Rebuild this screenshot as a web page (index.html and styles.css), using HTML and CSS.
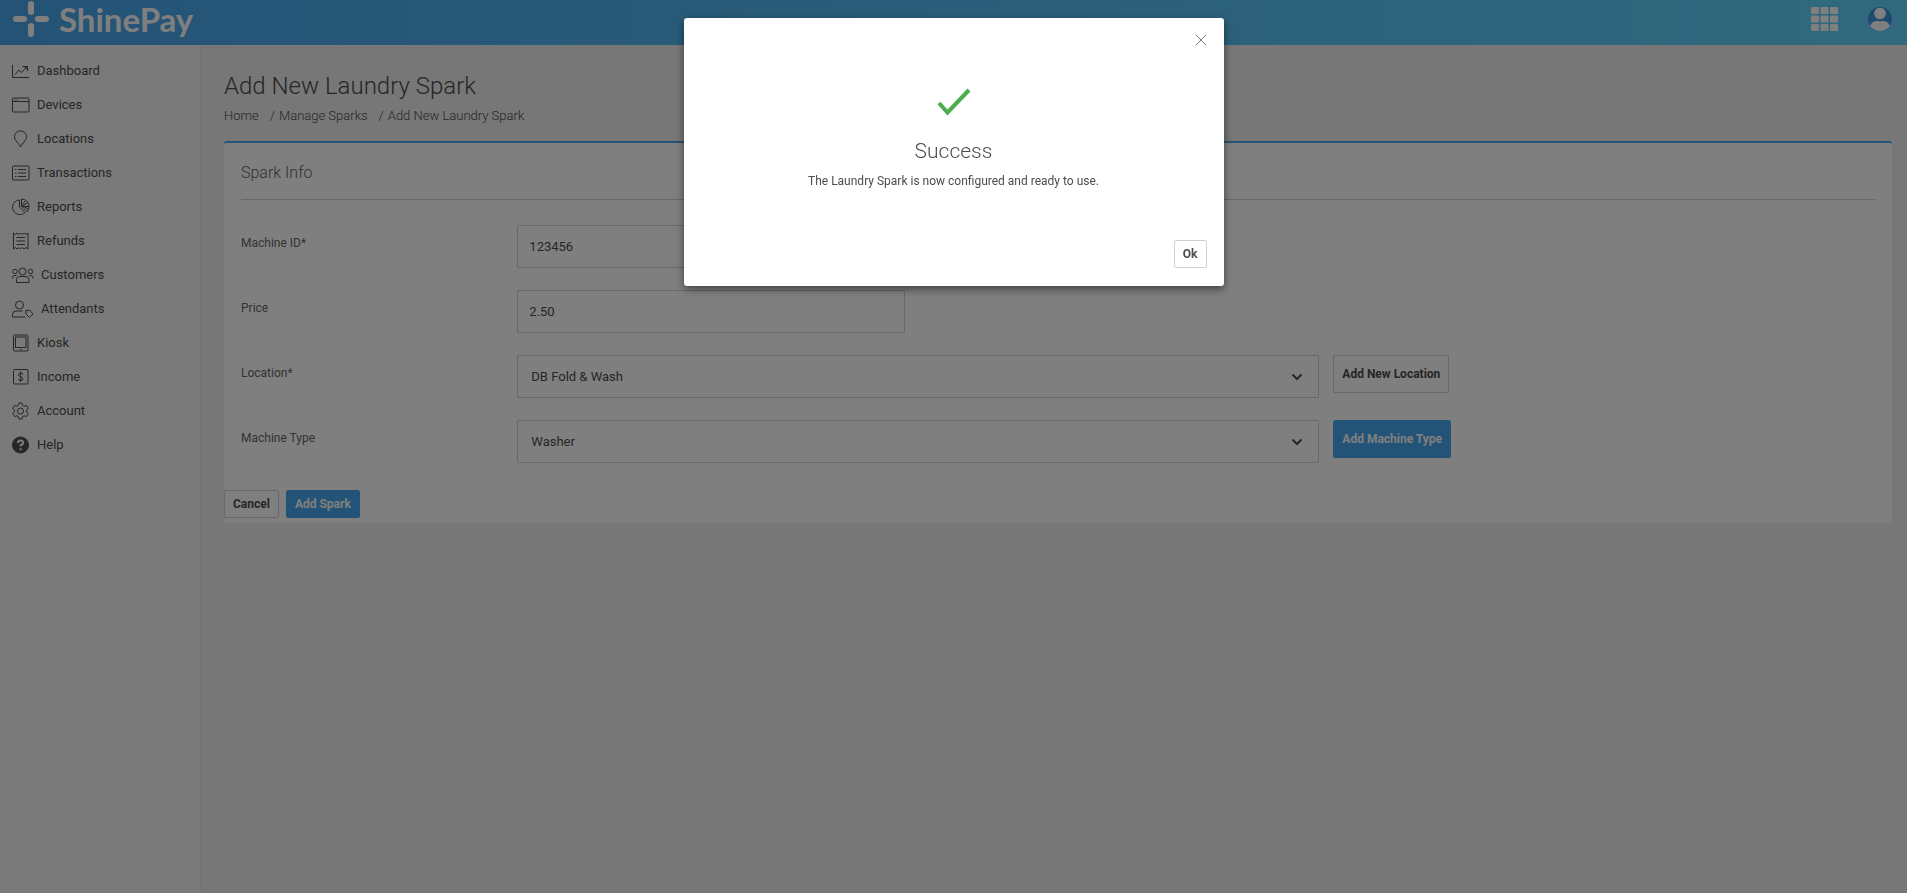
FILE: index.html
```html
<!DOCTYPE html>
<html lang="en">
<head>
    <meta charset="UTF-8">
    <meta name="viewport" content="width=device-width, initial-scale=1.0">
    <title>Add New Laundry Spark - ShinePay</title>
    <link rel="stylesheet" href="styles.css">
</head>
<body>
    <header class="header">
        <a class="logo" href="#">
            <svg width="36" height="36" viewBox="0 0 36 36" stroke="currentColor" stroke-width="6" stroke-linecap="round">
                <path d="M18 3v8M18 25v8M3 18h8M25 18h8"/>
            </svg>
            <span>ShinePay</span>
        </a>
        <div class="header-actions">
            <button class="icon-button" type="button" aria-label="Apps">
                <svg width="27" height="24" viewBox="0 0 27 24" fill="currentColor">
                    <rect x="0" y="0" width="8" height="7" rx="1"/><rect x="9.5" y="0" width="8" height="7" rx="1"/><rect x="19" y="0" width="8" height="7" rx="1"/>
                    <rect x="0" y="8.5" width="8" height="7" rx="1"/><rect x="9.5" y="8.5" width="8" height="7" rx="1"/><rect x="19" y="8.5" width="8" height="7" rx="1"/>
                    <rect x="0" y="17" width="8" height="7" rx="1"/><rect x="9.5" y="17" width="8" height="7" rx="1"/><rect x="19" y="17" width="8" height="7" rx="1"/>
                </svg>
            </button>
            <button class="icon-button" type="button" aria-label="Profile">
                <svg width="24" height="24" viewBox="0 0 24 24">
                    <circle cx="12" cy="12" r="12" fill="#3f94e0"/>
                    <path d="M2.2 19C3.5 15 7 13.300 12 14.500C17 13.300 20.500 15 21.800 19A12 12 0 0 1 2.200 19Z" fill="#fff"/>
                    <circle cx="12" cy="6.500" r="6.300" fill="#fff" stroke="#3f94e0"/>
                </svg>
            </button>
        </div>
    </header>

    <div class="page">
        <nav class="sidebar">
            <a href="#">
                <svg width="18" height="18" viewBox="0 0 18 18"><path d="M.5 3v12.500H17M3 12.500L7 8l2.500 2.500L14.500 5M10.500 4.500h5v4.500M12.500 4.500l3 3"/></svg>
                Dashboard
            </a>
            <a href="#">
                <svg width="18" height="18" viewBox="0 0 18 18"><rect x=".5" y="2" width="16.500" height="14" rx="1"/><path d="M.5 5.500H17M2.500 3.800h1M4.500 3.800h1"/></svg>
                Devices
            </a>
            <a href="#">
                <svg width="18" height="18" viewBox="0 0 18 18"><path d="M8.500 17C7 13.500 2.500 10.500 2.500 6.800a6 6 0 0 1 12 0C14.500 10.500 10 13.500 8.500 17Z"/></svg>
                Locations
            </a>
            <a href="#">
                <svg width="18" height="18" viewBox="0 0 18 18"><rect x=".5" y="2" width="16.500" height="14" rx="1"/><path d="M6 5.500h8M6 9h8M6 12.500h8M3 5.500h1.500M3 9h1.500M3 12.500h1.500"/></svg>
                Transactions
            </a>
            <a href="#">
                <svg width="18" height="18" viewBox="0 0 18 18"><path d="M7.500 2A7.300 7.300 0 1 0 13 14.500L7.500 9ZM9.500 1v7.500H17A7.500 7.500 0 0 0 9.500 1ZM10 8.500l5 5a7 7 0 0 0 2-5M9.500 7l4-4M12 8.500l4 2.500M10 8L15.500 5"/></svg>
                Reports
            </a>
            <a href="#">
                <svg width="18" height="18" viewBox="0 0 18 18"><path d="M1.500 1l2 1.500L5 1l2 1.500L8.500 1l2 1.500L12 1l2 1.500L16 1v16l-2-1.500-2 1.500-1.500-1.500-2 1.500L7 15.500 5 17l-1.500-1.500-2 1.500ZM4.500 5.500H13M4.500 9H13M4.500 12.500H13"/></svg>
                Refunds
            </a>
            <a href="#">
                <svg width="22" height="18" viewBox="0 0 22 18"><circle cx="10.500" cy="5.500" r="3.500"/><circle cx="3" cy="5.500" r="2.200"/><circle cx="18.500" cy="5.500" r="2.200"/><path d="M4.500 16.500v-3Q4.500 10.500 7.500 10.500h6.500Q17 10.500 17 13.500v3ZM.5 12.500V11.500Q.5 9.500 3 9.500h1.500M21 12.500V11.500Q21 9.500 18.500 9.500H17"/></svg>
                Customers
            </a>
            <a href="#">
                <svg width="22" height="18" viewBox="0 0 22 18"><circle cx="7.500" cy="5" r="4"/><path d="M13.500 17H.5v-2.500Q.5 11 4 11h6.500M13.500 10.500l4-.5 3.500 4-3.500 3.500-3.500-3.500ZM15.500 12h.5"/></svg>
                Attendants
            </a>
            <a href="#">
                <svg width="18" height="18" viewBox="0 0 18 18"><rect x="1.500" y="1" width="14.500" height="16" rx="1"/><rect x="3.500" y="3" width="10.500" height="10.500"/><path d="M8 15.300h1.500"/></svg>
                Kiosk
            </a>
            <a href="#">
                <svg width="18" height="18" viewBox="0 0 18 18"><rect x="1.500" y="1.500" width="14.500" height="14.500" rx="1"/><path d="M11 6.500Q11 5 8.700 5T6.500 6.700Q6.500 8.200 8.700 8.700T11 10.800Q11 12.500 8.700 12.500T6.500 11M8.700 3.500v10.500"/></svg>
                Income
            </a>
            <a href="#">
                <svg width="18" height="18" viewBox="0 0 18 18"><circle cx="8.500" cy="9" r="3"/><path d="M7 1h3l.6 2.300 1.500.9L14.500 3.500 16.300 6.200 14.700 8v2l1.600 1.800-1.800 2.700-2.400-.7-1.500.9L10 17H7l-.6-2.300-1.500-.9-2.400.7L.7 11.800 2.300 10V8L.7 6.200 2.500 3.500l2.400.7 1.500-.9Z"/></svg>
                Account
            </a>
            <a href="#">
                <svg width="18" height="18" viewBox="0 0 18 18"><circle class="solid" cx="8.500" cy="9" r="8"/><path class="cutout" d="M5.800 7Q6 4.500 8.500 4.500T11.200 6.800Q11.200 8.300 8.700 9v1.500M8.700 12.200v2"/></svg>
                Help
            </a>
        </nav>

        <main class="content">
            <h1>Add New Laundry Spark</h1>
            <ol class="breadcrumb">
                <li><a href="#">Home</a></li>
                <li><a href="#">Manage Sparks</a></li>
                <li>Add New Laundry Spark</li>
            </ol>

            <form class="panel">
                <h2>Spark Info</h2>

                <div class="form-row">
                    <label for="machineId">Machine ID*</label>
                    <input type="text" id="machineId" value="123456">
                </div>
                <div class="form-row">
                    <label for="price">Price</label>
                    <input type="text" id="price" value="2.50">
                </div>
                <div class="form-row">
                    <label for="location">Location*</label>
                    <div class="select-box">
                        <select id="location">
                            <option>DB Fold &amp; Wash</option>
                        </select>
                        <svg width="12" height="8" viewBox="0 0 12 8"><path d="M1.500 1.500L6 6l4.500-4.500"/></svg>
                    </div>
                    <button class="btn btn-tall" type="button">Add New Location</button>
                </div>
                <div class="form-row">
                    <label for="machineType">Machine Type</label>
                    <div class="select-box">
                        <select id="machineType">
                            <option>Washer</option>
                        </select>
                        <svg width="12" height="8" viewBox="0 0 12 8"><path d="M1.500 1.500L6 6l4.500-4.500"/></svg>
                    </div>
                    <button class="btn btn-primary btn-tall" type="button">Add Machine Type</button>
                </div>

                <div class="form-actions">
                    <button class="btn" type="button">Cancel</button>
                    <button class="btn btn-primary" type="submit">Add Spark</button>
                </div>
            </form>
        </main>
    </div>

    <div class="overlay">
        <div class="modal" role="dialog" aria-modal="true" aria-labelledby="modalTitle">
            <button class="modal-close" type="button" aria-label="Close">
                <svg width="12" height="12" viewBox="0 0 12 12"><path d="M1 1l10 10M11 1L1 11"/></svg>
            </button>
            <div class="modal-body">
                <svg width="34" height="28" viewBox="0 0 34 28"><path d="M2 15l8.500 9.500L32 2"/></svg>
                <h3 id="modalTitle">Success</h3>
                <p>The Laundry Spark is now configured and ready to use.</p>
            </div>
            <div class="modal-footer">
                <button class="btn" type="button">Ok</button>
            </div>
        </div>
    </div>
</body>
</html>
```
FILE: styles.css
```css
:root {
    --blue: #46a6ec;
    --text: #666666;
    --dark: #4c4c4c;
    --border: #d0d0d4;
}

* {
    box-sizing: border-box;
}
body {
    margin: 0;
    min-height: 100vh;
    display: flex;
    flex-direction: column;
    font-family: Roboto, sans-serif;
    font-size: 13px;
    line-height: 20px;
    color: var(--dark);
    background-color: #eeeeee;
}
a {
    color: inherit;
    text-decoration: none;
}
button, input, select {
    font: inherit;
    color: inherit;
}

/* Header */
.header {
    display: flex;
    justify-content: space-between;
    align-items: flex-start;
    height: 45px;
    padding: 0 15px 0 13px;
    background: linear-gradient(to right, #48a6ec, #62d2fc);
    color: #ffffff;
}
.logo {
    display: flex;
    align-items: center;
    gap: 10px;
    height: 38px;
    font-family: Lato, sans-serif;
    font-size: 33px;
    font-weight: 700;
}
.header-actions {
    display: flex;
    align-items: center;
    gap: 30px;
    height: 38px;
}
.icon-button {
    display: flex;
    padding: 0;
    border: none;
    background: none;
    color: #ffffff;
    cursor: pointer;
}

/* Sidebar */
.page {
    display: flex;
    flex: 1;
}
.sidebar {
    display: flex;
    flex-direction: column;
    flex: none;
    width: 201px;
    padding: 9px 12px;
    background-color: #f5f5f5;
    border-right: 1px solid #e6e6e6;
}
.sidebar a {
    display: flex;
    align-items: center;
    gap: 7px;
    height: 34px;
}
.sidebar svg {
    fill: none;
    stroke: currentColor;
}
.sidebar .solid {
    fill: currentColor;
}
.sidebar .cutout {
    stroke: #f5f5f5;
    stroke-width: 2;
}

/* Content */
.content {
    flex: 1;
    padding: 25px 15px 24px 23px;
}
h1, h2, h3, p {
    margin: 0;
    font-weight: 300;
}
h1 {
    font-size: 24px;
    line-height: 32px;
}
.breadcrumb {
    display: flex;
    gap: 11px;
    margin: 4px 0 15px;
    padding: 0;
    list-style: none;
    font-weight: 300;
}
.breadcrumb li + li::before {
    content: "/";
    margin-right: 4px;
}
.panel {
    padding-bottom: 5px;
    background-color: #ffffff;
    border-top: 2px solid var(--blue);
    border-radius: 3px;
}
h2 {
    margin: 0 17px 25px;
    padding: 18px 0 14px;
    border-bottom: 1px solid var(--border);
    font-size: 16px;
    line-height: 24px;
    color: var(--text);
}
.form-row {
    display: grid;
    grid-template-columns: 2fr 6fr 4fr;
    align-items: start;
    margin-bottom: 22px;
}
.form-row label {
    padding: 8px 17px;
    font-size: 12px;
    color: var(--text);
}
.form-row input,
.form-row select {
    width: 100%;
    height: 43px;
    border: 1px solid var(--border);
    border-radius: 1px;
    background-color: #ffffff;
}
.form-row input {
    max-width: 388px;
    margin-left: 16px;
    padding: 0 11px;
}
.form-row select {
    padding: 0 13px;
    appearance: none;
}
.select-box {
    display: grid;
    align-items: center;
    margin: 0 14px 0 16px;
}
.select-box select,
.select-box svg {
    grid-area: 1 / 1;
}
.select-box svg {
    justify-self: end;
    margin-right: 16px;
    fill: none;
    stroke: var(--dark);
    stroke-width: 2;
    pointer-events: none;
}
.form-row {
    margin-right: 4px;
}
.form-actions {
    display: flex;
    gap: 7px;
    padding-top: 5px;
}

/* Buttons */
.btn {
    justify-self: start;
    height: 28px;
    padding: 0 8px;
    border: 1px solid var(--border);
    border-radius: 2px;
    background-color: #ffffff;
    font-size: 12px;
    font-weight: 700;
    line-height: 16px;
    cursor: pointer;
}
.btn-primary {
    border-color: var(--blue);
    background-color: var(--blue);
    color: #ffffff;
}
.btn-tall {
    height: 38px;
}

/* Modal */
.overlay {
    position: fixed;
    inset: 0;
    display: flex;
    justify-content: center;
    align-items: flex-start;
    padding-top: 18px;
    background-color: rgba(0, 0, 0, 0.5);
}
.modal {
    display: flex;
    flex-direction: column;
    width: 540px;
    padding: 16px 17px 18px;
    background-color: #ffffff;
    border-radius: 3px;
    box-shadow: 0 3px 9px rgba(0, 0, 0, 0.5);
}
.modal-close {
    display: flex;
    align-self: flex-end;
    padding: 0;
    border: none;
    background: none;
    cursor: pointer;
}
.modal-close svg {
    fill: none;
    stroke: #808080;
}
.modal-body {
    display: flex;
    flex-direction: column;
    align-items: center;
    padding: 42px 0 49px;
    text-align: center;
}
.modal-body svg {
    fill: none;
    stroke: #4cae4c;
    stroke-width: 4;
}
.modal-body h3 {
    margin: 21px 0 6px;
    font-size: 21px;
    line-height: 28px;
}
.modal-body p {
    font-size: 12px;
    font-weight: 400;
}
.modal-footer {
    display: flex;
    justify-content: flex-end;
}
```
